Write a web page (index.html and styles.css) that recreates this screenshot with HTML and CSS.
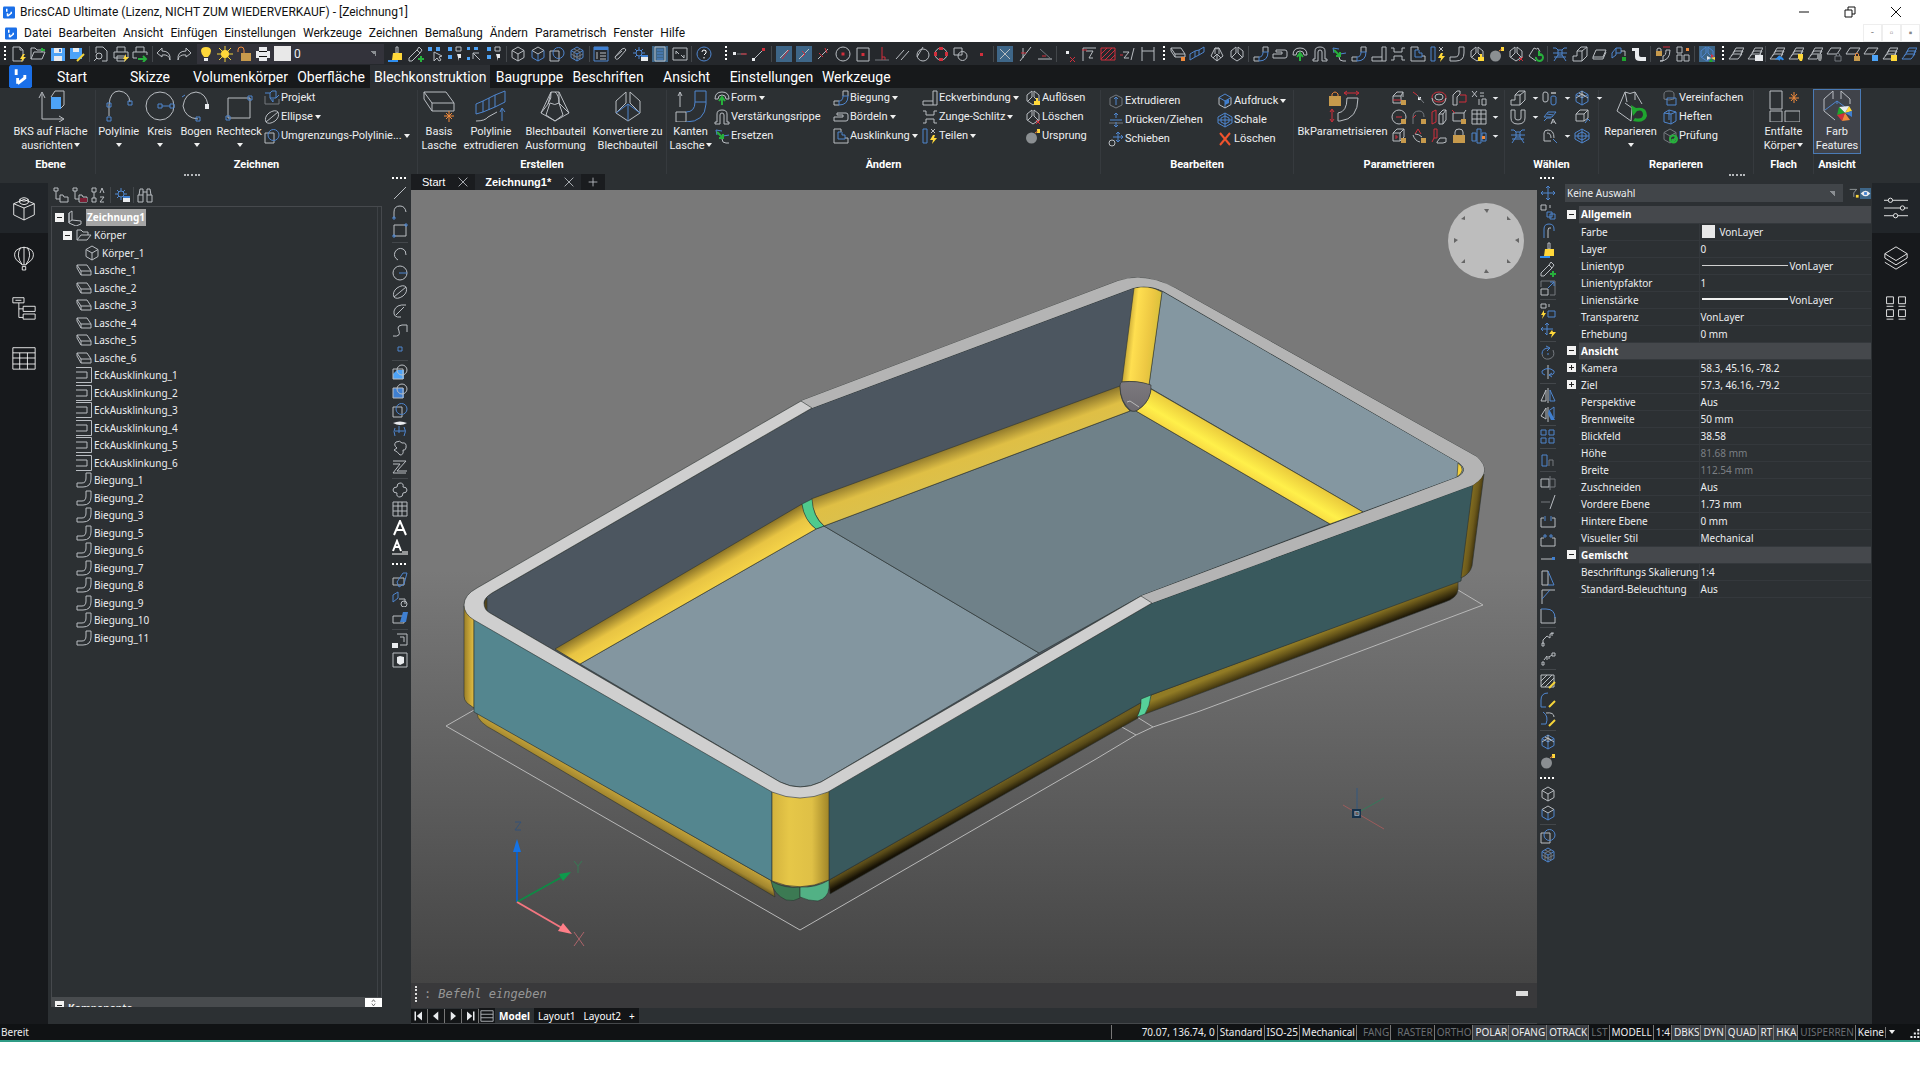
FILE: index.html
```html
<!DOCTYPE html>
<html lang="de">
<head>
    <meta charset="UTF-8">
    <title>BricsCAD Ultimate - [Zeichnung1]</title>
    <meta name="viewport" content="width=device-width, initial-scale=1.0">
    <link rel="stylesheet" href="styles.css">
</head>
<body>
<div class="app">
    <header class="titlebar">
        <i class="app-logo" data-icon="logo"></i>
        <span>BricsCAD Ultimate (Lizenz, NICHT ZUM WIEDERVERKAUF) - [Zeichnung1]</span>
        <div class="window-buttons" data-tools="win-min win-restore win-close"></div>
    </header>
    <nav class="menubar">
        <i class="app-logo" data-icon="logo"></i>
        <a href="#">Datei</a><a href="#">Bearbeiten</a><a href="#">Ansicht</a><a href="#">Einfügen</a><a href="#">Einstellungen</a><a href="#">Werkzeuge</a><a href="#">Zeichnen</a><a href="#">Bemaßung</a><a href="#">Ändern</a><a href="#">Parametrisch</a><a href="#">Fenster</a><a href="#">Hilfe</a>
        <div class="mdi-buttons"><button aria-label="Minimieren">-</button><button aria-label="Wiederherstellen">▫</button><button aria-label="Schließen">▪</button></div>
    </nav>

    <div class="toolbars">
        <div class="toolbar">
            <div class="tools file-tools" data-tools="grip new open save saveas | preview print plot | undo redo"></div>
            <div class="layer-combo">
                <div class="tools" data-tools="bulb sun unlock printer"></div>
                <span class="swatch"></span>
                <select aria-label="Layer"><option>0</option></select>
            </div>
            <div class="tools view-tools" data-tools="brush dropper sel1 sel2 sel3 sel2 | cube cubeb union mesh | props clip gear *panel cmd | help"></div>
        </div>
        <div class="tools toolbar" data-tools="grip trackpt endpt | *snapend *snapmid snapnear circ-c rect-c perp paral tang quad insert node | *inter appint ext | del zlock hatchred zfilter dimh"></div>
        <div class="tools toolbar" data-tools="grip flange loft form3 convert | bend hem form rib replace bend junction tab notch split bendw dissolve sphere erase repair | lattice prism flange2 assoc elbow | lockbend unfold | *colors"></div>
        <div class="tools toolbar" data-tools="grip layers layersb | layerprev layeron layeroff layer1 layerlock layerfrz layersun layerblu"></div>
    </div>

    <nav class="ribbon-tabs">
        <button class="bcad" aria-label="BricsCAD"><i data-icon="logo"></i></button>
        <button>Start</button><button>Skizze</button><button>Volumenkörper</button><button>Oberfläche</button><button class="active">Blechkonstruktion</button><button>Baugruppe</button><button>Beschriften</button><button>Ansicht</button><button>Einstellungen</button><button>Werkzeuge</button>
    </nav>

    <div class="ribbon">
        <section class="group g-ebene">
            <div class="group-body">
                <button class="big"><i data-icon="L-ucs"></i>BKS auf Fläche<br>ausrichten<b class="dd"></b></button>
            </div>
            <h2>Ebene</h2>
        </section>
        <section class="group g-zeichnen">
            <div class="group-body">
                <button class="big"><i data-icon="L-pline"></i>Polylinie<br><b class="dd"></b></button>
                <button class="big"><i data-icon="L-circle"></i>Kreis<br><b class="dd"></b></button>
                <button class="big"><i data-icon="L-arc"></i>Bogen<br><b class="dd"></b></button>
                <button class="big"><i data-icon="L-rect"></i>Rechteck<br><b class="dd"></b></button>
                <div class="col">
                    <button><i data-icon="project"></i>Projekt</button>
                    <button><i data-icon="ellipse"></i>Ellipse<b class="dd"></b></button>
                    <button><i data-icon="union"></i>Umgrenzungs-Polylinie...<b class="dd"></b></button>
                </div>
            </div>
            <h2>Zeichnen</h2>
        </section>
        <section class="group g-erstellen">
            <div class="group-body">
                <button class="big"><i data-icon="L-base"></i>Basis<br>Lasche</button>
                <button class="big"><i data-icon="L-extr"></i>Polylinie<br>extrudieren</button>
                <button class="big"><i data-icon="L-form"></i>Blechbauteil<br>Ausformung</button>
                <button class="big"><i data-icon="L-conv"></i>Konvertiere zu<br>Blechbauteil</button>
            </div>
            <h2>Erstellen</h2>
        </section>
        <section class="group g-aendern">
            <div class="group-body">
                <button class="big"><i data-icon="L-edge"></i>Kanten<br>Lasche<b class="dd"></b></button>
                <div class="col w120">
                    <button><i data-icon="form"></i>Form<b class="dd"></b></button>
                    <button><i data-icon="rib"></i>Verstärkungsrippe</button>
                    <button><i data-icon="replace"></i>Ersetzen</button>
                </div>
                <div class="col w90">
                    <button><i data-icon="bend"></i>Biegung<b class="dd"></b></button>
                    <button><i data-icon="hem"></i>Bördeln<b class="dd"></b></button>
                    <button><i data-icon="notch"></i>Ausklinkung<b class="dd"></b></button>
                </div>
                <div class="col w102">
                    <button><i data-icon="junction"></i>Eckverbindung<b class="dd"></b></button>
                    <button><i data-icon="tab"></i>Zunge-Schlitz<b class="dd"></b></button>
                    <button><i data-icon="split"></i>Teilen<b class="dd"></b></button>
                </div>
                <div class="col">
                    <button><i data-icon="dissolve"></i>Auflösen</button>
                    <button><i data-icon="erase"></i>Löschen</button>
                    <button><i data-icon="sphere"></i>Ursprung</button>
                </div>
            </div>
            <h2>Ändern</h2>
        </section>
        <section class="group g-bearbeiten">
            <div class="group-body">
                <div class="col w110">
                    <button><i data-icon="extrude"></i>Extrudieren</button>
                    <button><i data-icon="pushpull"></i>Drücken/Ziehen</button>
                    <button><i data-icon="movesel"></i>Schieben</button>
                </div>
                <div class="col">
                    <button><i data-icon="imprint"></i>Aufdruck<b class="dd"></b></button>
                    <button><i data-icon="shell"></i>Schale</button>
                    <button><i data-icon="xred"></i>Löschen</button>
                </div>
            </div>
            <h2>Bearbeiten</h2>
        </section>
        <section class="group g-param">
            <div class="group-body">
                <button class="big"><i data-icon="L-param"></i>BkParametrisieren</button>
                <div class="icon-grid five" data-tools="pbox pline2 pring pprism xeq v pcirc parc pcol pplane table v pbox2 ptri pang lock pcolb v"></div>
            </div>
            <h2>Parametrieren</h2>
        </section>
        <section class="group g-waehlen">
            <div class="group-body">
                <div class="icon-grid three" data-tools="prism v holes v cubegrid v ushape v faces0 nodd cubegear nodd lattice nodd arcs v shell nodd"></div>
            </div>
            <h2>Wählen</h2>
        </section>
        <section class="group g-rep">
            <div class="group-body">
                <button class="big"><i data-icon="L-repair"></i>Reparieren<br><b class="dd"></b></button>
                <div class="col">
                    <button><i data-icon="simplify"></i>Vereinfachen</button>
                    <button><i data-icon="stitch"></i>Heften</button>
                    <button><i data-icon="check"></i>Prüfung</button>
                </div>
            </div>
            <h2>Reparieren</h2>
        </section>
        <section class="group g-flach">
            <div class="group-body">
                <button class="big"><i data-icon="L-unfold"></i>Entfalte<br>Körper<b class="dd"></b></button>
            </div>
            <h2>Flach</h2>
        </section>
        <section class="group g-ansicht">
            <div class="group-body">
                <button class="big pressed"><i data-icon="L-color"></i>Farb<br>Features</button>
            </div>
            <h2>Ansicht</h2>
        </section>
    </div>

    <main class="workspace">
        <nav class="rail">
            <button class="active" aria-label="Mechanik"><i data-icon="R-brick"></i></button>
            <button aria-label="Tipps"><i data-icon="R-balloon"></i></button>
            <button aria-label="Struktur"><i data-icon="R-struct"></i></button>
            <button aria-label="Tabelle"><i data-icon="R-table"></i></button>
        </nav>

        <aside class="browser">
            <div class="grip-h"></div>
            <div class="tools browser-tools" data-tools="folder1 folder2 az | gear | binoc"></div>
            <div class="tree-box">
                <ul class="tree">
                    <li class="root"><b class="pm minus"></b><i data-icon="part"></i><span class="selected">Zeichnung1</span></li>
                    <li class="sub"><b class="pm minus"></b><i data-icon="folder"></i>Körper</li>
                    <li class="leaf2"><i data-icon="cube"></i>Körper_1</li>
                    <li><i data-icon="slab"></i>Lasche_1</li>
                    <li><i data-icon="slab"></i>Lasche_2</li>
                    <li><i data-icon="slab"></i>Lasche_3</li>
                    <li><i data-icon="slab"></i>Lasche_4</li>
                    <li><i data-icon="slab"></i>Lasche_5</li>
                    <li><i data-icon="slab"></i>Lasche_6</li>
                    <li><i data-icon="corner"></i>EckAusklinkung_1</li>
                    <li><i data-icon="corner"></i>EckAusklinkung_2</li>
                    <li><i data-icon="corner"></i>EckAusklinkung_3</li>
                    <li><i data-icon="corner"></i>EckAusklinkung_4</li>
                    <li><i data-icon="corner"></i>EckAusklinkung_5</li>
                    <li><i data-icon="corner"></i>EckAusklinkung_6</li>
                    <li><i data-icon="bendw"></i>Biegung_1</li>
                    <li><i data-icon="bendw"></i>Biegung_2</li>
                    <li><i data-icon="bendw"></i>Biegung_3</li>
                    <li><i data-icon="bendw"></i>Biegung_5</li>
                    <li><i data-icon="bendw"></i>Biegung_6</li>
                    <li><i data-icon="bendw"></i>Biegung_7</li>
                    <li><i data-icon="bendw"></i>Biegung_8</li>
                    <li><i data-icon="bendw"></i>Biegung_9</li>
                    <li><i data-icon="bendw"></i>Biegung_10</li>
                    <li><i data-icon="bendw"></i>Biegung_11</li>
                </ul>
            </div>
            <div class="components"><b class="pm minus"></b><span>Komponente</span><button aria-label="Blättern"><i data-icon="updown"></i></button></div>
        </aside>

        <div class="tools vbar" data-tools="griph line pline rect | arc circle ellipse earc spline point | region1 region2 union surf blob zig | cloud table bigA smallA griph plane1 plane2 plane3 | view1 view2"></div>

        <section class="center">
            <div class="doc-tabs">
                <button>Start<i data-icon="x"></i></button>
                <button class="active">Zeichnung1*<i data-icon="x"></i></button>
                <button class="add" aria-label="Neu"><i data-icon="plus"></i></button>
            </div>
            <div class="viewport">
                <svg class="scene" viewBox="411 190 1126 793" preserveAspectRatio="xMidYMid slice">
                    <defs>
                        <linearGradient id="tubeA" gradientUnits="userSpaceOnUse" x1="678" y1="577" x2="695" y2="606"><stop offset="0" stop-color="#8d7527"/><stop offset=".4" stop-color="#e8c443"/><stop offset="1" stop-color="#fad94a"/></linearGradient>
                        <linearGradient id="tubeB" gradientUnits="userSpaceOnUse" x1="965" y1="442" x2="975" y2="470"><stop offset="0" stop-color="#8f782b"/><stop offset=".5" stop-color="#dfbf45"/><stop offset="1" stop-color="#dcc04a"/></linearGradient>
                        <linearGradient id="tubeC" gradientUnits="userSpaceOnUse" x1="1256" y1="450" x2="1240" y2="477"><stop offset="0" stop-color="#eaca3c"/><stop offset=".55" stop-color="#fff04a"/><stop offset="1" stop-color="#f4cf40"/></linearGradient>
                        <linearGradient id="tubeD" gradientUnits="userSpaceOnUse" x1="1127" y1="335" x2="1156" y2="338"><stop offset="0" stop-color="#c9a937"/><stop offset=".25" stop-color="#ffdf50"/><stop offset=".75" stop-color="#edc843"/><stop offset="1" stop-color="#dcc23c"/></linearGradient>
                        <linearGradient id="post"><stop offset="0" stop-color="#d3b23d"/><stop offset=".3" stop-color="#e6c748"/><stop offset=".7" stop-color="#dfc046"/><stop offset="1" stop-color="#a08528"/></linearGradient>
                        <linearGradient id="postL"><stop offset="0" stop-color="#9b7f28"/><stop offset="1" stop-color="#e3bf43"/></linearGradient>
                        <linearGradient id="postR" gradientUnits="userSpaceOnUse" x1="1465" y1="530" x2="1479" y2="532"><stop offset="0" stop-color="#877222"/><stop offset=".5" stop-color="#6d5a1b"/><stop offset="1" stop-color="#2c230a"/></linearGradient>
                        <linearGradient id="footL" gradientUnits="userSpaceOnUse" x1="630" y1="800" x2="622" y2="814"><stop offset="0" stop-color="#c2a23a"/><stop offset=".5" stop-color="#a3872f"/><stop offset="1" stop-color="#3a2f10"/></linearGradient>
                        <linearGradient id="footR" gradientUnits="userSpaceOnUse" x1="988" y1="790" x2="994" y2="801"><stop offset="0" stop-color="#6f5e1f"/><stop offset=".4" stop-color="#574918"/><stop offset="1" stop-color="#171205"/></linearGradient>
                        <linearGradient id="footR2" gradientUnits="userSpaceOnUse" x1="1306" y1="639" x2="1312" y2="654"><stop offset="0" stop-color="#917b25"/><stop offset=".4" stop-color="#665519"/><stop offset="1" stop-color="#1c1606"/></linearGradient>
                        <linearGradient id="ball" x1="0" y1="0" x2="0" y2="1"><stop offset="0" stop-color="#7c797e"/><stop offset="1" stop-color="#6d6a6f"/></linearGradient>
                    </defs>
                    <!-- sheet metal contour on the ground plane -->
                    <path class="ground" d="M474 710L446 726L800 930L1096 759L1136 735L1153 727L1200 711L1337 660L1483 605L1458 590M1137 717L1153 727M1120 726L1136 735"/>
                    <!-- inside of the tray -->
                    <g class="edge">
                        <path fill="#4c5660" d="M484 603Q484 598 492 593L812 408L1133 288Q1148 284 1163 291L1458 462Q1470 470 1458 477L1141 596L821 782Q800 792 780 782L490 613Q484 610 484 603Z"/>
                        <path fill="#8497a1" d="M1162 291L1458 462Q1470 470 1458 477L1363 512L1150 388L1149 384Z"/>
                        <path fill="#8396a0" d="M816 529L824 526L1039 653L821 782Q800 792 780 782L580 664Z"/>
                        <path fill="#6f8189" d="M824 526L1130 411L1136 411L1330 524L1141 596L1039 653Z"/>
                        <path fill="url(#tubeA)" d="M555 649L802 504Q806 522 816 529L580 664Z"/>
                        <path fill="url(#tubeB)" d="M811 499L1120 386Q1120 403 1130 411L824 526Q813 516 811 499Z"/>
                        <path fill="url(#tubeC)" d="M1151 389L1363 512L1330 524L1136 411Q1149 404 1151 389Z"/>
                        <path fill="url(#tubeD)" d="M1134 288Q1148 284 1162 292L1149 385Q1136 380 1122 382Z"/>
                        <path fill="#4fca8d" d="M802 504L812 499Q813 517 824 526L816 529Q804 520 802 504Z"/>
                        <path fill="url(#ball)" d="M1120 386Q1120 382 1122 382Q1137 380 1151 385Q1152 400 1139 409Q1134 413 1130 410Q1120 401 1120 386Z"/>
                        <path fill="#f1cf3f" d="M1458 463Q1467 470 1457 477Z"/>
                        <path fill="#55461a" d="M487 598V611Q481 604 487 598Z"/>
                    </g>
                    <path class="ground" d="M1127 402L1130 401L1139 407"/>
                    <!-- outer walls -->
                    <g class="edge">
                        <path fill="url(#postL)" d="M464 606L474 618V708L467 703Q464 700 464 696Z"/>
                        <path fill="url(#footL)" d="M477 713L772 881L775 897L495 731Q477 722 477 713Z"/>
                        <path fill="#54868f" d="M474 619L772 791V881L474 712Z"/>
                        <path fill="url(#footR)" d="M829 880L1142 702L1138 718L830 894Z"/>
                        <path fill="url(#footR2)" d="M1151 695L1458 581L1458 590Q1457 598 1445 602L1145 714Z"/>
                        <path fill="#39595d" d="M828 791L1152 603L1474 484L1461 581L1151 695L1142 702L829 880Z"/>
                        <path fill="url(#postR)" d="M1473 484L1484 474L1472 566Q1470 574 1461 578Z"/>
                        <path fill="#56d19a" d="M1141 699L1151 695Q1150 706 1145 714L1137 717Q1142 708 1141 699Z"/>
                        <path fill="#3c7a53" d="M771 881Q785 889 800 887V898Q794 902 786 900Q773 894 771 881Z"/>
                        <path fill="#52b185" d="M800 887Q816 888 829 880V888Q828 898 818 901Q808 901 800 897Z"/>
                        <path fill="url(#post)" d="M772 790H829V880Q800 893 772 881Z"/>
                    </g>
                    <!-- top rim -->
                    <path class="edge" fill="#cfcfcf" fill-rule="evenodd" d="M464 605Q464 595 477 588L801 401L1118 281Q1145 272 1175 288L1477 457Q1493 472 1473 485L1152 603L828 792Q800 804 772 792L474 620Q464 614 464 605ZM484 603Q484 610 490 613L780 782Q800 792 821 782L1141 596L1458 477Q1470 470 1458 462L1163 291Q1148 284 1133 288L812 408L492 593Q484 598 484 603Z"/>
                    <path fill="#b4b4b4" d="M801 401L1118 281Q1145 272 1175 288L1477 457Q1493 472 1473 485L1152 603L1141 596L1458 477Q1470 470 1458 462L1163 291Q1148 284 1133 288L812 408Z"/>
                    <path class="edge" fill="none" d="M801 401L812 408M1141 596L1152 603"/>
                    <!-- navigation disc -->
                    <circle cx="1486" cy="241" r="38" fill="#bdbdbd"/>
                    <path fill="#666" d="M1484 209h5l-2 4zM1484 273h5l-3-4zM1454 238v5l4-3zM1519 238v5l-4-3zM1461 219l4-3v4zM1507 216l4 4h-4zM1461 263l4-4v4zM1507 263v-4l4 4z"/>
                    <!-- UCS icon -->
                    <g stroke-width="2" fill="none">
                        <path stroke="#0d5ec4" d="M517 902V850"/><path stroke="#0f8a45" d="M517 902L562 877"/><path stroke="#f37680" d="M517 902L562 928"/>
                    </g>
                    <path fill="#1473e6" d="M517 839L521 852H513Z"/><path fill="#0e9a4c" d="M571 872L563 881L559 874Z"/><path fill="#ff7f88" d="M572 934L558 931L563 923Z"/>
                    <g stroke-width="1" fill="none" opacity=".6"><path stroke="#f37680" d="M574 932l10 14M584 932l-10 14"/><path stroke="#249455" d="M574 861l4 5v7M582 861l-4 5"/><path stroke="#1d4f8d" d="M515 822h6l-6 8h6"/></g>
                    <!-- crosshair -->
                    <g fill="none"><path stroke="#9c5c5c" d="M1343 805L1384 829"/><path stroke="#35795a" d="M1357 813L1384 798"/><path stroke="#35587f" d="M1357 788V810"/><path stroke="#16324c" stroke-width="2" d="M1353 810h7v7h-7z"/><path stroke="#7b96ad" d="M1355 811.5h4v4h-4z"/></g>
                </svg>
            </div>
            <div class="command">
                <span class="cmd-grip"></span><label for="cmd">:</label>
                <input id="cmd" type="text" placeholder="Befehl eingeben">
                <button aria-label="Liste"></button>
            </div>
            <div class="layout-tabs">
                <div class="tools pager" data-tools="pg-first pg-prev pg-next pg-last"></div>
                <button class="list" aria-label="Layouts"><i data-icon="list"></i></button>
                <button class="active">Model</button><button>Layout1</button><button>Layout2</button><button>+</button>
            </div>
        </section>

        <div class="tools vbar vbar-right" data-tools="griph move copy offset brush dropper scale | copyq moveq | rotate rot3d | mirror mirror3 | array | align | stretch trim extend brk2 join taper chamfer fillet | pe1 pe2 | hatche plinee splinee | cubegrid sphere griph cube cubeb | union mesh"></div>

        <aside class="properties">
            <div class="grip-h"></div>
            <div class="prop-head">
                <select aria-label="Auswahl"><option>Keine Auswahl</option></select>
                <div class="tools" data-tools="filter *eye"></div>
            </div>
            <table>
                <colgroup><col class="c-toggle"><col class="c-name"><col></colgroup>
                <tr class="head"><td><b class="pm minus"></b></td><th colspan="2">Allgemein</th></tr>
                <tr><td></td><th>Farbe</th><td><span class="swatch"></span>VonLayer</td></tr>
                <tr><td></td><th>Layer</th><td>0</td></tr>
                <tr><td></td><th>Linientyp</th><td><span class="rule"></span>VonLayer</td></tr>
                <tr><td></td><th>Linientypfaktor</th><td>1</td></tr>
                <tr><td></td><th>Linienstärke</th><td><span class="rule thick"></span>VonLayer</td></tr>
                <tr><td></td><th>Transparenz</th><td>VonLayer</td></tr>
                <tr><td></td><th>Erhebung</th><td>0 mm</td></tr>
                <tr class="head"><td><b class="pm minus"></b></td><th colspan="2">Ansicht</th></tr>
                <tr><td><b class="pm plus"></b></td><th>Kamera</th><td>58.3, 45.16, -78.2</td></tr>
                <tr><td><b class="pm plus"></b></td><th>Ziel</th><td>57.3, 46.16, -79.2</td></tr>
                <tr><td></td><th>Perspektive</th><td>Aus</td></tr>
                <tr><td></td><th>Brennweite</th><td>50 mm</td></tr>
                <tr><td></td><th>Blickfeld</th><td>38.58</td></tr>
                <tr><td></td><th>Höhe</th><td class="off">81.68 mm</td></tr>
                <tr><td></td><th>Breite</th><td class="off">112.54 mm</td></tr>
                <tr><td></td><th>Zuschneiden</th><td>Aus</td></tr>
                <tr><td></td><th>Vordere Ebene</th><td>1.73 mm</td></tr>
                <tr><td></td><th>Hintere Ebene</th><td>0 mm</td></tr>
                <tr><td></td><th>Visueller Stil</th><td>Mechanical</td></tr>
                <tr class="head"><td><b class="pm minus"></b></td><th colspan="2">Gemischt</th></tr>
                <tr><td></td><th>Beschriftungs Skalierung</th><td>1:4</td></tr>
                <tr><td></td><th>Standard-Beleuchtung</th><td>Aus</td></tr>
            </table>
        </aside>

        <nav class="rail">
            <button class="active" aria-label="Eigenschaften"><i data-icon="R-sliders"></i></button>
            <button aria-label="Layer"><i data-icon="R-layers"></i></button>
            <button aria-label="Bibliothek"><i data-icon="R-grid"></i></button>
        </nav>
    </main>

    <footer class="status">
        <span class="ready">Bereit</span>
        <span class="coords">70.07, 136.74, 0</span>
        <button>Standard</button><button>ISO-25</button><button>Mechanical</button><button class="off wide">FANG</button><button class="off wide">RASTER</button><button class="off">ORTHO</button><button class="on">POLAR</button><button class="on">OFANG</button><button class="on">OTRACK</button><button class="off">LST</button><button>MODELL</button><button>1:4</button><button class="on">DBKS</button><button class="on">DYN</button><button class="on">QUAD</button><button class="on">RT</button><button class="on">HKA</button><button class="off">UISPERREN</button><button>Keine</button>
        <span class="corner"><b class="dd"></b><i data-icon="resize"></i></span>
    </footer>
</div>
<script src="icons.js"></script>
</body>
</html>
```
FILE: icons.js
```js
// Icon parts: lower case key = stroke, upper case key = fill.
// w white, b blue, r red, g green, y yellow, o orange, k dark
const CUBE = 'M8 1L14 4.5V11.5L8 15L2 11.5V4.5ZM2 4.5L8 8L14 4.5M8 8V15';
const BEND = 'M1 15V11H6Q10 11 10 6V1H15V7Q15 15 7 15Z';
const SHEETS = 'M1 13L5 8H14L10 13ZM3 10L7 5H15L12 10M5 7L8 2H16L13 7';
const SHEET = 'M1 8L5 2H15L11 8Z';
const CONV = 'M7 1L2 5V11L8 15L14 11V5L9 1V7L13 11M7 1V7L3 11';
const LOCK = 'M9 10H15V15H9ZM10.500 10V8Q12 6 13.500 8V10';

const icons = {
    grip: { d: 'M8 0V16' },
    griph: { d: 'M0 8H16' },
    logo: { Q: 'M1 0H15L16 1V15L15 16H1L0 15V1Z', n: 'M5 3V7M6 13V9M6 13L11 9V7' },
    new: { w: 'M2 1H9L12 4V15H2ZM9 1V4H12', Y: 'M12 8L9 13H11L10 16L15 11H12L14 8Z' },
    open: { w: 'M1 13V2H5L7 4H12V6M1 13H12L15 6H4Z', g: 'M12 2V4H15' },
    save: { A: 'M1 2H15V15H1Z', W: 'M4 2H12V7H4ZM4 10H12V15H4Z', B: 'M9 3H11V6H9Z' },
    saveas: { A: 'M1 2H13V13H1Z', W: 'M4 2H10V6H4Z', y: 'M8 15L15 8' },
    preview: { w: 'M3 1H10L14 5V15H9M3 7V1M1 15L4 12M3 10a3 3 0 1 0 6 0a3 3 0 1 0-6 0' },
    print: { w: 'M4 6V1H12V6M1 12V6H15V12H1M4 10H12V15H4Z', Y: 'M13 8L10 13H12L11 16L16 11H13Z' },
    plot: { w: 'M4 6V1H12V6M1 12V6H15V9M1 12H5', g: 'M6 13H14M11 10L14 13L11 16' },
    undo: { w: 'M6 2L1 7L6 11V9Q13 8 14 14Q15 5 6 5Z' },
    redo: { w: 'M10 2L15 7L10 11V9Q3 8 2 14Q1 5 10 5Z' },
    bulb: { Y: 'M8 1Q13 1 13 5Q13 8 10 11H6Q3 8 3 5Q3 1 8 1Z', W: 'M6 12H10V15H6Z' },
    sun: { t: 'M8 0V16M0 8H16M2 2L14 14M14 2L2 14', Y: 'M4 8a4 4 0 1 0 8 0a4 4 0 1 0-8 0' },
    unlock: { L: 'M5 7H15V15H5Z', o: 'M8 7V4Q8 1 5 1Q2 1 2 4V6' },
    printer: { W: 'M4 1H12V5H15V12H12V15H4V12H1V5H4Z', k: 'M4 5.500H12M4 10.500H12' },
    brush: { w: 'M8 1H10V7H8Z', Y: 'M5 7H14V14H4Z', a: 'M0 15H10' },
    dropper: { w: 'M1 12L9 4L12 7L4 15H1ZM9 4L11 1L14 4L12 7', g: 'M13 10V16M10 13H16' },
    sel1: { A: 'M1 1H5V5H1ZM9 1H13V5H9Z', w: 'M7 6V15L10 12L12 15L14 14L12 11L15 10Z' },
    sel2: { w: 'M9 1H14V5H9Z', A: 'M1 1H5V5H1ZM1 9H5V13H1Z', W: 'M10 8H14V12H12L12 15Z' },
    sel3: { A: 'M1 1H4V4H1ZM8 1H12V4H8ZM1 11H4V14H1Z', w: 'M7 7L14 14M7 7V13M7 7H13' },
    cube: { w: CUBE },
    cubeb: { w: 'M8 1L14 4.500L8 8L2 4.500Z', b: 'M2 4.500V11.500L8 15L14 11.500V4.500M8 8V15' },
    union: { w: 'M1 5H10V15H1Z', b: 'M4 7a5.500 5.500 0 1 0 11 0a5.500 5.500 0 1 0-11 0' },
    mesh: { b: CUBE, s: 'M5 3L11 6M11 3L5 6M5 10L11 13M2 8L8 11L14 8M5 6V13M11 6V13' },
    props: { b: 'M1 1H15V15H1Z', B: 'M1 1H15V4H1Z', w: 'M4 6V13M7 7H13M7 10H13M7 13H13' },
    clip: { w: 'M2 11L9 3Q12 1 13 4L6 12Q3 15 2 11L9 5' },
    gear: { b: 'M4 7a3 3 0 1 0 6 0a3 3 0 1 0-6 0M7 1V4M7 10V13M1 7H4M10 7H13M3 3L5 5M11 3L9 5M3 11L5 9', W: 'M9 9H16V15H9Z', B: 'M9 9H16V11H9Z' },
    panel: { w: 'M3 1H13V15H3Z', b: 'M5 4H11M5 7H11M5 10H11M5 13H11' },
    cmd: { w: 'M1 2H15V14H1ZM4 5L7 8M9 9L12 12M4 5V8M12 9V12' },
    help: { b: 'M1 8a7 7 0 1 0 14 0a7 7 0 1 0-14 0', l: 'M6 6Q6 4 8 4Q11 4 10 7L8 9M8 11V12.500' },
    trackpt: { s: 'M5 8H14', W: 'M1 6H4V9H1Z', r: 'M9 8H15' },
    endpt: { w: 'M3 13L12 4', R: 'M11 2H14V5H11Z', W: 'M1 12H4V15H1Z' },
    snapend: { w: 'M4 12L12 4', r: 'M6 13L13 4' },
    snapmid: { w: 'M3 13L13 3', r: 'M6 5L9 8L6 11' },
    snapnear: { w: 'M3 13L13 3', r: 'M4 7L8 11M10 2L12 7' },
    'circ-c': { w: 'M1 8a7 7 0 1 0 14 0a7 7 0 1 0-14 0', R: 'M6.500 6.500H9.500V9.500H6.500Z' },
    'rect-c': { w: 'M2 2H14V15H2Z', R: 'M6.500 7H9.500V10H6.500Z' },
    perp: { s: 'M1 14H15', r: 'M8 1V14M8 11H11V14' },
    paral: { w: 'M2 13L10 4M7 14L15 5' },
    tang: { w: 'M3 9a6 6 0 1 0 12 0a6 6 0 1 0-12 0M3 11L9 1' },
    quad: { w: 'M2 8a6 6 0 1 0 12 0a6 6 0 1 0-12 0', R: 'M1 6H4V10H1ZM12 6H15V10H12ZM6 1H10V4H6ZM6 12H10V15H6Z' },
    insert: { w: 'M1 2H9V9H1ZM5 10a4.500 4.500 0 1 0 9 0a4.500 4.500 0 1 0-9 0' },
    node: { R: 'M7 7H10V10H7Z' },
    inter: { w: 'M3 3L13 13M13 3L3 13' },
    appint: { w: 'M3 15L14 1M6 2V12', r: 'M4 7H9' },
    ext: { w: 'M1 13H15', s: 'M3 3L14 13', r: 'M5 10H9' },
    del: { W: 'M5 5H8V8H5Z', r: 'M9 11L14 16M14 11L9 16' },
    zlock: { w: 'M2 15V2H15M5 5H12L8 12H12', r: 'M1 4H6' },
    hatchred: { r: 'M1 2H15V14H1ZM1 8L7 2M1 13L12 2M5 14L15 4M10 14L15 9' },
    zfilter: { w: 'M3 6H9L4 12H9M11 14L14 2', r: 'M0 9H3' },
    dimh: { w: 'M2 1V15M14 1V15M2 5H14' },
    flange: { w: 'M1 2H11L15 8V11H5L1 5ZM1 2L5 8H15M5 8V11', O: 'M11 11H15V15H11Z' },
    flange2: { w: 'M5 4H15L12 11H2ZM2 11V13H12L15 6' },
    loft: { b: 'M1 8L6 5V11L1 14ZM6 5L10 4V9L6 11M10 4L15 1V6L10 9' },
    form3: { w: 'M6 2L2 10L8 15L14 10L10 2ZM6 2Q8 4 10 2M8 8V15M4 12L8 8L12 12M6 2V8M10 2V8' },
    convert: { w: CONV },
    bend: { w: 'M6 15H1V11H6M15 6V1H10V6', b: 'M6 11Q10 11 10 6H15Q15 15 6 15Z' },
    bendw: { w: BEND },
    hem: { w: 'M4 4H13Q15 4 15 6V10Q15 12 13 12H1V8H10V6H4Z' },
    form: { w: 'M1 9Q1 2 8 2Q15 2 15 9H12Q12 5 8 5Q4 5 4 9Z', g: 'M8 7V15M5 11L8 7L11 11' },
    rib: { w: 'M1 15V13H3V5Q3 1 8 1Q13 1 13 5V13H15V15H10V6Q10 4 8 4Q6 4 6 6V15Z' },
    replace: { b: 'M2 2L8 3M2 2L3 7M9 8L15 7', g: 'M3 4L9 10M5 10H9V6', w: 'M8 11Q8 15 12 15H15' },
    junction: { w: 'M1 15V11H11V1H15V15ZM11 11V15' },
    tab: { w: 'M1 2H4V6H12V2H15M1 14H4V10H12V14H15' },
    notch: { w: 'M1 1H8V4M1 1V15H15V10H12', b: 'M8 4H5V11H12V7H9V4' },
    split: { b: 'M1 1H5V15H1Z', w: 'M9 1L13 5M13 1L9 5', Y: 'M11 7L8 12H11L10 16L15 10H12L13 7Z' },
    dissolve: { w: CONV, Y: 'M11 8H13V11H15V15H9V11H11Z' },
    erase: { w: CONV, r: 'M11 11L15 15M15 11L11 15' },
    sphere: { S: 'M1 10a5.500 5.500 0 1 0 11 0a5.500 5.500 0 1 0-11 0', Y: 'M12 1H15V5H12Z', o: 'M10 5L13 3' },
    repair: { w: 'M6 2L1 10L8 15M6 2Q9 4 10 2L12 6', g: 'M8 11a3.500 3.500 0 1 0 3-3M11 5V9H14' },
    lattice: { b: 'M1 2H4L6 4H10L12 2H15M2 15L6 9H10L14 15M6 4V9M10 4V9M1 7H15M2 11H14' },
    prism: { w: 'M1 15V10H5V5L9 1H15V10L10 15ZM5 5H10V15M10 5L15 1' },
    assoc: { b: 'M1 7L5 2V9L1 12ZM5 2H10V7H5', w: 'M10 5H14V10', G: 'M11 11H15V15H11Z' },
    elbow: { W: 'M1 2H8V9Q8 11 10 11H15V15H9Q4 15 4 11V5H1Z' },
    lockbend: { r: 'M8 1H15', L: 'M1 5H7V10H1Z', w: 'M8 15V10Q11 10 11 4H15Q15 15 5 15ZM2 5V3Q4 1 6 3V5' },
    unfold: { w: 'M2 1H7V7H2ZM2 9H7V15H2ZM9 9H14V15H9Z', O: 'M11 2H14V5H11Z' },
    colors: { b: CONV, R: 'M12 12V8L15 10Z', Y: 'M12 12L16 11V14Z', G: 'M12 12L14 16H10Z', W: 'M12 12L8 14V10Z' },
    layers: { w: SHEETS },
    layersb: { w: SHEETS, W: 'M8 9H16V15H8Z' },
    layerprev: { w: SHEETS, a: 'M14 14Q13 11 9 12L11 10M9 12L11 14' },
    layeron: { w: SHEETS, Y: 'M10 8H15V12L14 15H12L10 12Z' },
    layeroff: { w: SHEETS, S: 'M10 8H15V12L14 15H12L10 12Z' },
    layer1: { w: SHEET, s: LOCK },
    layerlock: { w: SHEET, L: 'M9 10H15V15H9Z', o: 'M10.500 10V8Q12 6 13.500 8V10' },
    layerfrz: { w: SHEET, A: 'M9 9H15V15H9Z' },
    layersun: { w: SHEETS, Y: 'M9 9H15V15H9Z' },
    layerblu: { b: SHEETS },
    project: { b: 'M1 3H6L8 1H12V8H6V3M6 8L9 12M12 8L15 5M9 12V9', s: 'M1 6V14H15V9' },
    ellipse: { w: 'M2 13Q0 8 5 4Q11 0 14 3Q16 8 11 12Q5 16 2 13ZM2 13L14 3' },
    extrude: { s: 'M8 2L14 5V12L8 15L2 12V5Z', b: 'M8 4V12M6 6L8 4L10 6' },
    pushpull: { s: 'M1 11H15', b: 'M8 1V6M6 3L8 1L10 3M8 10V15M6 13L8 15L10 13M2 8H14' },
    movesel: { w: 'M1 12a3 3 0 1 0 6 0a3 3 0 1 0-6 0', b: 'M10 1V11M5 6H15M8 3L10 1L12 3M8 9L10 11L12 9M13 4L15 6L13 8' },
    imprint: { b: 'M2 4.500L8 8L14 4.500L8 1ZM8 8V15', w: 'M2 4.500V11.500L8 15L14 11.500V4.500', B: 'M8 8L12 6V10L8 12Z' },
    shell: { b: 'M8 1L15 5V11L8 15L1 11V5ZM8 4L12 6V10L8 12L4 10V6ZM1 8H15M8 1V15' },
    xred: { x: 'M3 2L13 14M13 2L3 14' },
    pbox: { w: 'M2 6L6 2H12V7M2 6H10V13H2ZM10 6L12 2', r: 'M2 10H10', L: 'M10 10H15V15H10Z' },
    pline2: { r: 'M2 2L6 5', W: 'M7 7H10V10H7Z', s: 'M6 5L13 13' },
    pring: { r: 'M1 7a7 5 0 1 0 14 0a7 5 0 1 0-14 0', w: 'M4 7a4 3 0 1 0 8 0a4 3 0 1 0-8 0M1 8Q2 15 8 15Q14 15 15 8' },
    pprism: { w: 'M2 15V5L6 1H9V4L6 7V15Z', r: 'M9 5H15V12H8' },
    xeq: { w: 'M1 1L6 7M6 1L1 7M9 3H13M9 6H13M8 9V15M11 9H15V15H11Z' },
    pcirc: { w: 'M1 8a7 7 0 1 0 14 0a7 7 0 1 0-14 0', r: 'M5 8H11', L: 'M10 10H15V15H10Z' },
    parc: { s: 'M2 15V8Q2 2 8 2Q13 2 13 8', r: 'M2 9L5 6', L: 'M10 10H15V15H10Z' },
    pcol: { r: 'M1 3L5 1V13L1 15Z', w: 'M8 5L12 1H15V11L12 15H8ZM8 5H12V15M12 5L15 1' },
    pplane: { w: 'M2 4H13V12H2ZM13 4L15 1', r: 'M1 1L4 4', L: 'M10 10H15V15H10Z' },
    table: { w: 'M1 1H15V15H1ZM1 5H15M1 10H15M6 1V15M10 1V15' },
    pbox2: { w: 'M2 5L6 1H13V9L9 13H2ZM2 5H9V13M9 5L13 1', r: 'M5 9H7M5 7V11', L: 'M10 10H15V15H10Z' },
    ptri: { r: 'M7 1L4 6M7 1L10 6', w: 'M2 7Q4 13 9 14M4 6Q8 6 11 9', L: 'M10 10H15V15H10Z' },
    pang: { r: 'M3 1H6V10H3ZM3 10L1 14', w: 'M6 14L9 10H15V14L12 15H6Z' },
    lock: { L: 'M2 7H14V15H2Z', w: 'M4 7V4Q4 1 8 1Q12 1 12 4V7' },
    pcolb: { b: 'M1 5H5V13H1ZM6 1H10V15H6ZM11 5H15V13H11Z', O: 'M11 8H14V11H11Z' },
    holes: { w: 'M1 4Q1 2 3 2Q6 2 6 4V10Q6 12 3 12Q1 12 1 10Z', b: 'M9 7Q9 6 11 6Q14 6 14 7V13Q14 15 11 15Q9 15 9 13Z', l: 'M9 3H14' },
    cubegrid: { b: CUBE, w: 'M2 8L8 4L14 8M8 1V8M5 3L11 6' },
    ushape: { w: 'M1 1H5V9Q5 11 8 11Q11 11 11 9V1H15V9Q15 15 8 15Q1 15 1 9Z' },
    faces0: { b: 'M2 8L6 3H14L10 8ZM2 12L5 9H9M5 5L11 6', w: 'M9 15L11 10L14 15M10 13H13' },
    cubegear: { w: 'M2 5L6 1H14V9L10 12H2ZM2 5H10V12M10 5L14 1', b: 'M11 14L14 10L16 12' },
    arcs: { w: 'M2 13V5Q2 2 6 2Q12 2 12 10M2 13H9M5 5Q9 5 9 10', b: 'M11 11L15 15' },
    simplify: { s: 'M2 4Q2 1 7 1Q12 1 12 4V9Q7 11 2 9Z', b: 'M5 8H14V15H5Z' },
    stitch: { b: 'M2 4L7 1L14 3V12L9 15L2 13ZM7 1V11M9 5V15M2 4L9 5L14 3' },
    check: { s: CUBE, g: 'M8 11a3.500 3.500 0 1 0 7 0a3.500 3.500 0 1 0-7 0M10 11L11 13L14 9' },
    folder1: { w: 'M1 1H5V4H1ZM3 4V12H7M7 8H10L11 10H15V15H7Z' },
    folder2: { w: 'M1 1H5V4H1ZM3 4V12H7M7 8H10L11 10H15V15H7Z', E: 'M8 11H15V15H8Z' },
    az: { w: 'M1 1H5V5H1ZM1 11H5V15H1ZM3 5V11M9 6L11 1L13 6M9 10H13L9 15H13' },
    binoc: { w: 'M1 8H6V15H1ZM10 8H15V15H10ZM2 8L3 2H6V8M14 8L13 2H10V8M6 5H10' },
    updown: { k: 'M5 7L8 3L11 7M5 10L8 14L11 10' },
    part: { w: 'M2 3L5 1V10L14 11V14L9 16L2 13ZM2 3V13M5 10L2 12' },
    folder: { w: 'M1 13V3H5L7 5H12V8M1 13H11L15 8H5Z' },
    slab: { w: 'M1 3H11L15 9V13H5L1 6ZM1 3L5 9H15M5 9V13' },
    corner: { w: 'M0 .5H15.500V15.500H0M0 5H11V11H0' },
    line: { w: 'M2 14L14 2' },
    pline: { w: 'M2 14V8Q2 2 8 2Q13 2 14 8', b: 'M1 13H3V15H1Z' },
    rect: { w: 'M2 2H14V13H2Z', b: 'M1 12H3V14H1ZM13 1H15V3H13Z' },
    arc: { w: 'M6 14Q1 11 3 6Q6 1 11 3Q14 4 14 9' },
    circle: { w: 'M1 8a7 7 0 1 0 14 0a7 7 0 1 0-14 0', b: 'M7 8H15' },
    earc: { w: 'M9 14Q1 15 2 8Q4 1 14 2M4 12L12 4' },
    spline: { w: 'M1 14Q9 15 7 9Q3 2 15 3V10' },
    point: { b: 'M6 6H10V10H6Z' },
    region1: { A: 'M5 6H12V15H1V10Z', w: 'M1 5H11V15H1ZM5 6a5 5 0 1 0 10 0a5 5 0 1 0-10 0' },
    region2: { B: 'M1 5H12V15H1Z', w: 'M1 5H11V15H1ZM5 6a5 5 0 1 0 10 0a5 5 0 1 0-10 0' },
    surf: { W: 'M1 2Q8-1 15 2Q8 6 1 2Z', b: 'M3 7Q1 10 3 15M7 5V12M12 6Q15 10 12 15M3 10H13' },
    blob: { w: 'M5 8Q1 5 4 2Q8 0 10 3Q15 2 14 8Q13 11 11 10Q12 15 8 15Q6 12 2 10Z' },
    zig: { w: 'M1 2H14L5 12H15M1 5H8L1 14H14' },
    cloud: { w: 'M5 5Q5 1 8 1Q12 1 11 5Q15 5 15 8Q15 11 11 11Q11 15 8 15Q4 15 5 11Q1 11 1 8Q1 5 5 5Z' },
    bigA: { n: 'M2 15L8 1L14 15M4 10H12' },
    smallA: { n: 'M1 12L5 2L9 12M3 8H8', l: 'M0 15H16M10 13H16' },
    plane1: { w: 'M1 6H12V13H1Z', b: 'M5 10L11 1H15L12 12L7 15Z' },
    plane2: { b: 'M1 4L6 1V7L1 11Z', w: 'M7 8H13V13M9 13a3 3 0 1 0 6 0a3 3 0 1 0-6 0' },
    plane3: { w: 'M1 6H12V13H1Z', B: 'M8 12L11 2H16L14 12Z' },
    view1: { w: 'M5 1H15V12H8M8 4H12V9', W: 'M0 10H6V15H0Z' },
    view2: { w: 'M1 1H15V15H1Z', W: 'M5 5L8 4L12 5V11L8 13L5 11Z' },
    move: { b: 'M8 1V15M1 8H15M6 3L8 1L10 3M6 13L8 15L10 13M3 6L1 8L3 10M13 6L15 8L13 10' },
    copy: { w: 'M1 1H6V6H1ZM10 1V4', b: 'M7 8H12V13H7ZM10 10H15V15H10Z' },
    offset: { b: 'M4 15V6Q4 1 9 1Q14 1 14 6V8', w: 'M8 15V7Q8 4 11 5' },
    scale: { w: 'M1 9H8V15H1Z', s: 'M1 7V1H15V15H10', b: 'M8 8L14 2M10 2H14V6' },
    copyq: { w: 'M1 1H6V5H1ZM9 1V4', b: 'M8 8H15V14H8Z', Y: 'M4 7L1 12H3L2 16L6 10H4Z' },
    moveq: { b: 'M7 1V13M1 7H13M5 3L7 1L9 3M5 11L7 13M3 5L1 7L3 9', Y: 'M12 8L9 12H12L11 16L16 10H13Z' },
    rotate: { s: 'M13 5Q16 12 9 14Q3 15 2 9', b: 'M2 9Q2 3 9 3M6 1L10 3L7 6M8 8V10' },
    rot3d: { w: 'M8 1V15', b: 'M5 11Q1 10 2 7Q8 2 14 7Q15 11 9 11M12 9L9 11L12 13' },
    mirror: { w: 'M6 3V14H1ZM8 1V16', b: 'M10 3V14H15Z' },
    mirror3: { w: 'M6 2V13L1 10ZM8 1V16', B: 'M9 3L15 14H11L8 8Z', b: 'M10 4L14 1V12' },
    array: { b: 'M1 1H6V6H1ZM9 1H14V6H9ZM1 9H6V14H1ZM9 9H14V14H9Z' },
    align: { b: 'M2 3H7V14H2Z', s: 'M9 14V8H13V14' },
    stretch: { w: 'M1 4H9V12H1Z', s: 'M9 4H15V12H9M10 1V15' },
    trim: { s: 'M1 8H10', w: 'M15 1L10 15' },
    extend: { w: 'M1 5V14H15V5H12M1 5H4', b: 'M5 3V8M11 3V8' },
    brk2: { w: 'M1 6V14H15V6M1 6H4M12 6H15', b: 'M3 4H7M9 4H13M5 2V6M11 2V6' },
    join: { w: 'M1 8H12', B: 'M12 6H15V9H12Z' },
    taper: { w: 'M2 1V15H8V1Z', b: 'M8 1L14 15H8' },
    chamfer: { w: 'M2 15V1M2 1H15', b: 'M2 10L10 1' },
    fillet: { w: 'M1 1V15H15V9', b: 'M1 1H6Q15 1 15 10' },
    pe1: { w: 'M3 13V9L7 5L10 7V3L14 2M2 12H4V15H2ZM12 1V5' },
    pe2: { w: 'M2 12H4V15H2ZM4 10L7 6V10M9 6V9M12 3H15V6H12ZM9 7L12 5' },
    hatche: { w: 'M1 2H14V14H1ZM1 8L7 2M1 13L12 2M5 14L14 5', y: 'M9 15L15 9' },
    plinee: { b: 'M8 1Q1 1 1 8V15H6', y: 'M9 15L15 9' },
    splinee: { b: 'M3 1Q9 5 6 13H1', w: 'M6 2Q14 1 14 6', y: 'M9 15L15 9' },
    filter: { w: 'M1 2H11L7 7V13', Y: 'M10 10H14V14H10Z' },
    eye: { W: 'M1 8Q8 0 15 8Q8 16 1 8Z', B: 'M6 6H10V10H6Z' },
    x: { w: 'M3 3L13 13M13 3L3 13' },
    plus: { w: 'M8 3V13M3 8H13' },
    list: { w: 'M1 2H15V14H1ZM1 6H15M1 10H15' },
    'pg-first': { W: 'M12 2V14L5 8ZM2 2H4V14H2Z' },
    'pg-prev': { W: 'M11 2V14L4 8Z' },
    'pg-next': { W: 'M5 2V14L12 8Z' },
    'pg-last': { W: 'M4 2V14L11 8ZM12 2H14V14H12Z' },
    resize: { W: 'M12 3H15V6H12ZM12 8H15V11H12ZM7 8H10V11H7ZM12 13H15V16H12ZM7 13H10V16H7ZM2 13H5V16H2Z' },
    'win-min': { k: 'M3 8H13' },
    'win-restore': { k: 'M3 6H10V13H3ZM6 6V3H13V10H10' },
    'win-close': { k: 'M3 3L13 13M13 3L3 13' },
    v: { W: 'M3 6H13L8 11Z' },
    nodd: {},

    // 32px ribbon icons
    'L-ucs': { w: 'M7 29V4M7 29H28M4 8L7 2L10 8M24 26L29 29L24 32M16 7L20 1H29V15L26 18', A: 'M16 7H26V19H16Z' },
    'L-pline': { w: 'M6 26V15Q7 1 16 1Q26 2 27 12', b: 'M4 13H8V17H4ZM4 27H8V31H4ZM25 11H29V15H25Z' },
    'L-circle': { w: 'M2 16a14 14 0 1 0 28 0a14 14 0 1 0-28 0', b: 'M14 14H18V18H14ZM26 14H30V18H26ZM18 16H26' },
    'L-arc': { w: 'M18 29Q5 28 3 16Q5 3 16 2Q26 3 28 15', b: 'M16 27H20V31H16ZM2 7L5 5', W: 'M25 14H29V19H25Z' },
    'L-rect': { w: 'M5 8H27V28H5Z', b: 'M25 6H29V10H25ZM3 26H7V30H3Z' },
    'L-base': { w: 'M1 2H23L31 13V21H9L1 9ZM1 2L9 13H31M9 13V21', o: 'M26 21V32M21 26H31M23 23L29 29M29 23L23 29' },
    'L-extr': { b: 'M1 14L8 11V22L1 24ZM8 11L20 5L30 1V12L20 17L8 22M20 5V17M14 8V20M27 31V19M25 22L27 18L30 22', w: 'M1 31Q10 31 13 27L22 22' },
    'L-form': { w: 'M12 2H20L30 23L16 31L2 23ZM12 2L9 14L2 23M20 2V13L30 23M12 2Q13 8 9 14M20 13Q16 16 11 13L7 25L16 31L24 25ZM16 2Q20 5 20 13' },
    'L-conv': { w: 'M14 2L4 11V23L16 31L28 23V11L18 2V13L28 23M14 2V13L4 23', b: 'M4 23L16 14L28 23M16 14V31' },
    'L-edge': { w: 'M1 22H11V32H1ZM5 2V17M3 6L5 2L7 6', b: 'M11 22Q20 22 20 12V1H31V14Q30 32 11 32M20 12H31' },
    'L-param': { L: 'M2 6H14V16H2Z', o: 'M5 6V4Q8 0 11 4V6', r: 'M18 3H31M20 1L17 3L20 5M29 1L32 3L29 5M5 20V31M3 22L5 19L7 22M3 29L5 32L7 29', w: 'M11 31V23Q20 22 20 8H31Q31 29 13 31Z' },
    'L-repair': { w: 'M10 2L2 21L16 31L17 18L10 13M10 2Q15 5 20 2L27 14M20 2V10M10 2L12 12', G: 'M16 15L18 26L22 21Q28 19 28 25Q27 30 20 28L18 31Q29 34 32 26Q32 16 21 18Z' },
    'L-unfold': { w: 'M2 1H14V19H2ZM2 21H14V32H2ZM17 21H32V32H17Z', o: 'M26 2V13M21 8H31M23 4L29 11M29 4L23 11' },
    'L-color': { b: 'M16 11L4 20M16 11V14M16 11L28 20', w: 'M12 1L3 9V21L14 30M20 1L29 9V14M12 1V9M20 1V9', Y: 'M24 23L28 16L31 21Z', W: 'M24 23L18 17L28 16Z', G: 'M24 23L18 17L16 25Z', R: 'M24 23L16 25L21 31Z', B: 'M24 23L31 21L31 27Z', O: 'M24 23L21 31L29 30Z' },

    // 28px rail icons
    'R-brick': { l: 'M2 9L14 4L26 9V22L14 28L2 22ZM2 9L14 14L26 9M14 14V28M9 8V4Q14 0 19 4V8Q14 12 9 8M9 4Q14 8 19 4' },
    'R-balloon': { l: 'M12 22L5 16Q1 10 5 5Q14-2 23 5Q27 10 23 16L16 22ZM12 22Q4 11 10 2M16 22Q24 11 18 2M14 1V22M12 24H16V28H12Z' },
    'R-struct': { l: 'M1 2H14V8H1ZM4 5H11M8 8V25H13M8 15H13M13 12H27V18H13ZM13 21H27V27H13Z' },
    'R-table': { l: 'M1 2H27V27H1ZM1 8H27M1 14H27M1 21H27M9 8V27M18 8V27' },
    'R-sliders': { l: 'M0 5H5M10 5H28M0 14H19M24 14H28M0 23H11M16 23H28M5 5a2.500 2.500 0 1 0 5 0a2.500 2.500 0 1 0-5 0M19 14a2.500 2.500 0 1 0 5 0a2.500 2.500 0 1 0-5 0M11 23a2.500 2.500 0 1 0 5 0a2.500 2.500 0 1 0-5 0' },
    'R-layers': { l: 'M14 1L27 9L14 17L1 9ZM1 14L14 22L27 14M1 19L14 27L27 19M1 9V14M27 9V14' },
    'R-grid': { l: 'M3 1H11V9H3ZM17 1H25V9H17ZM3 16H11V24H3ZM17 16H25V24H17ZM3 12H11M17 12H25M3 27H11M17 27H25' }
};

function svg(name) {
    const size = name.startsWith('L-') ? 32 : name.startsWith('R-') ? 28 : 16;
    const parts = Object.entries(icons[name]).map(([key, d]) =>
        `<path class="${key === key.toUpperCase() ? 'f' : 's'}-${key.toLowerCase()}" d="${d}"/>`);
    return `<svg viewBox="0 0 ${size} ${size}">${parts.join('')}</svg>`;
}

document.querySelectorAll('[data-icon]').forEach(el => {
    el.innerHTML = svg(el.dataset.icon);
});

document.querySelectorAll('[data-tools]').forEach(bar => {
    bar.innerHTML = bar.dataset.tools.split(' ').map(tool => {
        if (tool === '|') return '<span class="sep"></span>';
        const name = tool.replace('*', '');
        if (name.startsWith('grip')) return `<span class="${name}">${svg(name)}</span>`;
        return `<button class="tool${tool[0] === '*' ? ' on' : ''}" aria-label="${name}">${svg(name)}</button>`;
    }).join('');
});
```
FILE: styles.css
```css
* {
    box-sizing: border-box;
}
body {
    margin: 0;
    background: #fff;
    color: #eceef0;
    font-family: Roboto, "Noto Sans", sans-serif;
    font-size: 11px;
}
button, input, select {
    font: inherit;
    color: inherit;
    background: none;
    border: none;
    padding: 0;
    margin: 0;
}
button {
    white-space: nowrap;
}
svg {
    display: block;
    width: 16px;
    height: 16px;
}
i {
    display: block;
    flex: none;
}
.app {
    display: flex;
    flex-direction: column;
    height: 100vh;
    padding-bottom: 38px;
}

/* icon parts */
path[class^="s-"] { fill: none; stroke-width: 1; }
path[class^="f-"] { stroke: none; }
.s-w { stroke: #b9bdc2; }
.s-l { stroke: #fff; }
path.s-n { stroke: #fff; stroke-width: 2; }
.s-s { stroke: #74797f; }
.s-b { stroke: #4f86cf; }
path.s-a { stroke: #2f8ded; stroke-width: 2; }
.s-r { stroke: #d12f3c; }
path.s-g { stroke: #27b03c; stroke-width: 2; }
path.s-y { stroke: #f6d53a; stroke-width: 2; }
.s-t { stroke: #f6d53a; }
.s-o { stroke: #f08a3c; }
path.s-x { stroke: #f0532d; stroke-width: 2; }
.s-k { stroke: #111; }
path.s-d { stroke: #fff; stroke-width: 2; stroke-dasharray: 2 2; }
.f-q { fill: #1a6fe8; }
.f-w { fill: #e9ebee; }
.f-s { fill: #8b8f92; }
.f-b { fill: #3f7fd0; }
.f-a { fill: #4da3f7; }
.f-r { fill: #d12f3c; }
.f-e { fill: #7a1f35; }
.f-g { fill: #1fa62f; }
.f-y { fill: #ffd83a; }
.f-o { fill: #f08a3c; }
.f-l { fill: #c79a4c; }

/* small arrows and +/- boxes */
.dd {
    display: inline-block;
    border: 3px solid transparent;
    border-top: 4px solid #f0f0f0;
    border-bottom: none;
    margin-left: 1px;
    vertical-align: 2px;
}
.pm {
    display: block;
    width: 9px;
    height: 9px;
    background: linear-gradient(#222, #222) no-repeat center / 5px 1px #f2f2f2;
}
.pm.plus {
    background: linear-gradient(#222, #222) no-repeat center / 5px 1px, linear-gradient(#222, #222) no-repeat center / 1px 5px #f2f2f2;
}
.swatch {
    display: block;
    background: #e8e8e8;
}

/* title and menu */
.titlebar, .menubar {
    display: flex;
    align-items: center;
    background: #fff;
    color: #111;
    font-size: 12px;
}
.titlebar {
    height: 24px;
    padding: 0 16px 0 3px;
    gap: 5px;
}
.app-logo svg {
    width: 12px;
    height: 15px;
}
.window-buttons {
    display: flex;
    gap: 30px;
    margin-left: auto;
}
.menubar {
    height: 18px;
    padding-left: 5px;
    gap: 7px;
}
.menubar a {
    color: inherit;
    text-decoration: none;
}
.mdi-buttons {
    display: flex;
    margin-left: auto;
    align-self: stretch;
}
.mdi-buttons button {
    width: 19px;
    border: 1px solid #eee;
    color: #888;
    font-size: 10px;
    line-height: 10px;
}

/* toolbars */
.tools {
    display: flex;
    align-items: center;
}
.tool {
    display: block;
}
.tool.on {
    background: #3e6688;
}
.grip {
    width: 4px;
    overflow: hidden;
}
.grip svg {
    margin-left: -6px;
}
.sep {
    flex: none;
    width: 1px;
    height: 16px;
    background: #43474b;
}
.toolbars {
    display: grid;
    grid-template-columns: 721fr 438fr 559fr 202fr;
    height: 23px;
    background: #25282c;
}
.toolbar {
    display: flex;
    align-items: center;
    justify-content: space-between;
    padding: 0 3px;
    min-width: 0;
}
.file-tools {
    flex: 193 1 0;
    justify-content: space-between;
    padding-right: 5px;
}
.layer-combo {
    flex: 191 1 0;
    display: flex;
    align-items: center;
    height: 20px;
    background: #33333b;
    gap: 3px;
}
.layer-combo .tools {
    gap: 3px;
    padding-left: 1px;
}
.layer-combo .swatch {
    width: 17px;
    height: 15px;
}
select {
    appearance: none;
    background: linear-gradient(45deg, transparent 50%, #8b8f93 50%) no-repeat right 8px center / 5px 5px;
}
.layer-combo select {
    flex: 1;
    font-size: 12px;
    min-width: 0;
}
.view-tools {
    flex: 331 1 0;
    justify-content: space-between;
    padding: 0 6px 0 4px;
}

/* ribbon */
.ribbon-tabs {
    display: flex;
    height: 23px;
    background: #17191b;
    font-size: 14px;
    line-height: 22px;
    color: #fff;
}
.ribbon-tabs button {
    min-width: 78px;
    padding: 0 4px;
}
.ribbon-tabs .bcad {
    min-width: 24px;
    margin: 0 0 0 9px;
    padding: 0;
}
.bcad svg {
    width: 23px;
    height: 23px;
}
.ribbon-tabs .active {
    background: #2c2f33;
}
.ribbon {
    display: flex;
    flex: none;
    height: 86px;
    padding: 2px 0 0 6px;
    background: #2c3033;
}
.group {
    display: flex;
    flex-direction: column;
    justify-content: space-between;
    border-right: 1px solid #363a3e;
}
.group-body {
    display: flex;
    align-items: flex-start;
}
.group h2 {
    margin: 0;
    font-size: 11px;
    line-height: 18px;
    text-align: center;
    color: #fff;
}
.g-ebene { width: 90px; }
.g-zeichnen { width: 322px; }
.g-erstellen { width: 249px; }
.g-aendern { width: 434px; }
.g-bearbeiten { width: 193px; }
.g-param { width: 211px; }
.g-waehlen { width: 94px; }
.g-rep { width: 155px; }
.g-flach { width: 60px; }
.g-ansicht { width: 46px; border: none; }
.big {
    flex: 1 1 auto;
    line-height: 14px;
    text-align: center;
}
.big i {
    width: 32px;
    margin: 0 auto 3px;
}
.big svg {
    width: 32px;
    height: 32px;
}
.pressed {
    background: #40434a;
    outline: 1px solid #4a7ab5;
}
.col {
    display: flex;
    flex-direction: column;
    gap: 3px;
}
.col button {
    display: flex;
    align-items: center;
    gap: 1px;
    height: 16px;
    line-height: 16px;
}
.w120 { width: 119px; }
.w90 { width: 89px; }
.w102 { width: 103px; }
.w110 { width: 109px; }
.g-aendern .big { flex: 0 0 47px; }
.g-zeichnen .col { width: 153px; }
.g-rep .col { width: 91px; }
.g-bearbeiten .group-body { padding: 3px 0 0 7px; }
.icon-grid {
    display: grid;
    gap: 3px;
    align-items: center;
}
.icon-grid.five {
    grid-template-columns: repeat(5, 17px) 10px;
    padding-right: 3px;
}
.icon-grid.three {
    grid-template-columns: repeat(3, 17px 7px);
    column-gap: 4px;
    padding-left: 5px;
}
.icon-grid .tool[aria-label="v"] svg, .icon-grid .tool[aria-label="nodd"] svg {
    width: 9px;
}

/* workspace */
.workspace {
    display: flex;
    flex: 1;
    min-height: 0;
    background: #2c3033;
}
.rail {
    flex: none;
    width: 48px;
    margin-top: 9px;
    background: #17191c;
}
.rail button {
    display: block;
    width: 48px;
    height: 50px;
    padding: 0 12px;
}
.rail .active {
    background: #212529;
}
.rail svg {
    width: 24px;
    height: 24px;
    overflow: visible;
}
.browser {
    flex: none;
    display: flex;
    flex-direction: column;
    width: 335px;
    padding: 0 1px 17px 3px;
}
.tree, .components, .properties, .layout-tabs, .status {
    font-family: "Noto Sans", "Open Sans", sans-serif;
    font-size: 10px;
}
.grip-h {
    align-self: center;
    flex: none;
    width: 16px;
    height: 2px;
    border-top: 2px dotted #b5b8bb;
}
.browser .grip-h {
    margin-left: -50px;
}
.browser-tools {
    gap: 3px;
    height: 30px;
    padding: 8px 0 0 2px;
}
.tree-box {
    flex: 1;
    min-height: 0;
    border: 1px solid #46494d;
    border-bottom: none;
    box-shadow: inset -3px 0 #2c3033, inset -4px 0 #3d4145;
}
.tree {
    display: grid;
    grid-auto-rows: 17px 18px;
    margin: 0;
    padding: 2px 3px;
    list-style: none;
}
.tree li {
    display: flex;
    align-items: center;
    gap: 2px;
    padding-left: 21px;
}
.tree .root { padding-left: 0; gap: 3px; }
.tree .sub { padding-left: 8px; }
.tree .sub .pm { margin-right: 2px; }
.tree .leaf2 { padding-left: 29px; }
.tree .selected {
    background: #a5a5a5;
    color: #fff;
    font-weight: bold;
    line-height: 17px;
    padding: 0 1px;
}
.components {
    display: flex;
    align-items: flex-start;
    height: 10px;
    overflow: hidden;
    padding: 4px 0 0 4px;
    gap: 4px;
    background: #484b4e;
    font-weight: bold;
}
.components button {
    width: 17px;
    height: 9px;
    margin: -3px 0 0 auto;
    background: #fff;
}
.components svg {
    width: 17px;
    height: 9px;
}
.vbar {
    flex: none;
    flex-direction: column;
    width: 28px;
    gap: 3px;
    padding-left: 5px;
}
.vbar .sep {
    width: 16px;
    height: 1px;
}
.griph {
    display: flex;
    align-items: center;
    height: 11px;
    overflow: hidden;
}
.griph:first-child {
    height: 8px;
}
.griph svg {
    flex: none;
}
.vbar-right {
    padding-left: 0;
    padding-right: 7px;
}

/* drawing area */
.center {
    display: flex;
    flex: 1;
    flex-direction: column;
    min-width: 0;
}
.doc-tabs {
    display: flex;
    height: 16px;
    font-family: "Liberation Sans", Arial, sans-serif;
    font-size: 11px;
    color: #fff;
}
.doc-tabs button {
    display: flex;
    align-items: center;
    gap: 11px;
    padding: 0 5px 0 11px;
    background: #1a1c1f;
}
.doc-tabs .active {
    padding-left: 10px;
    font-weight: bold;
    background: #24272b;
}
.doc-tabs .add {
    padding: 0 5px;
}
.doc-tabs svg {
    width: 14px;
    height: 14px;
}
.viewport {
    flex: 1;
    min-height: 0;
    background: linear-gradient(#797979 48%, #444 100%);
}
.scene {
    width: 100%;
    height: 100%;
}
.edge {
    stroke: #2c3230;
    stroke-opacity: 0.6;
    stroke-width: 1;
}
.ground {
    fill: none;
    stroke: #b8b8b8;
}
.command {
    display: flex;
    align-items: center;
    gap: 7px;
    height: 25px;
    padding: 0 9px 4px 4px;
    background: #39393b;
    font-family: "DejaVu Sans Mono", monospace;
    font-size: 12px;
    color: #9a9a9a;
}
.cmd-grip {
    height: 16px;
    border-left: 2px dotted #ddd;
}
.command input {
    flex: 1;
    font-style: italic;
}
.command input::placeholder {
    color: #969696;
}
.command button {
    width: 12px;
    height: 5px;
    background: #dcdcdc;
}
.layout-tabs {
    display: flex;
    align-items: stretch;
    height: 16px;
    border-bottom: 1px solid #45484b;
}
.layout-tabs button {
    padding: 0 4px;
    background: #131517;
    color: #fff;
}
.pager .tool {
    padding: 1px 2px;
    border-right: 1px solid #777;
}
.pager svg {
    width: 12px;
    height: 12px;
}
.layout-tabs .list {
    padding: 0 1px;
}
.layout-tabs .list svg {
    width: 14px;
    height: 14px;
}
.layout-tabs .active {
    font-weight: bold;
    background: #2c3033;
}

/* properties */
.properties {
    flex: none;
    width: 307px;
    padding-right: 1px;
}
.properties .grip-h {
    margin: 0 0 8px 164px;
}
.prop-head {
    display: flex;
    align-items: center;
    gap: 6px;
    margin-bottom: 4px;
}
.prop-head select {
    width: 281px;
    height: 18px;
    padding-left: 2px;
    background-color: #414549;
}
.prop-head svg {
    width: 11px;
    height: 11px;
}
.properties table {
    width: 100%;
    table-layout: fixed;
    border-collapse: collapse;
}
.c-toggle {
    width: 14px;
}
.c-name {
    width: 120px;
}
.properties tr {
    height: 17px;
}
.properties td, .properties th {
    height: 17px;
    padding: 0;
    border-bottom: 1px solid #34383c;
    font-weight: normal;
    line-height: 16px;
    text-align: left;
    white-space: nowrap;
}
.properties td:first-child {
    padding-left: 2px;
    border: none;
}
.properties th {
    padding-left: 2px;
}
.properties tr:not(.head) td:last-child {
    padding-left: 1px;
    border-left: 1px solid #34383c;
}
.properties .head th {
    background: #45484c;
    font-weight: bold;
    color: #fff;
}
.properties .off {
    color: #7b7f83;
}
.properties .swatch {
    float: left;
    width: 13px;
    height: 13px;
    margin: 1px 5px 0 1px;
}
.rule {
    display: inline-block;
    width: 86px;
    margin: 0 2px 0 1px;
    border-top: 1px solid #d0d0d0;
    vertical-align: 4px;
}
.rule.thick {
    border-top: 2px solid #f0f0f0;
}

/* status bar */
.status {
    display: flex;
    align-items: center;
    height: 18px;
    background: #101214;
    border-bottom: 2px solid #2f9c86;
}
.ready {
    margin-right: auto;
    padding-left: 1px;
}
.coords {
    width: 106px;
    padding-right: 2px;
    border-left: 1px solid #777;
    text-align: right;
}
.status button {
    height: 15px;
    padding: 0 1px 0 2px;
    border-left: 1px solid #777;
    line-height: 15px;
}
.status .off {
    color: #6b6f73;
}
.status .wide {
    padding-left: 6px;
}
.status .on {
    background: #3a3d42;
}
.status .corner {
    display: flex;
    align-items: center;
    gap: 14px;
    padding-left: 2px;
    border-left: 1px solid #777;
}
.corner svg {
    width: 11px;
    height: 11px;
}
```
